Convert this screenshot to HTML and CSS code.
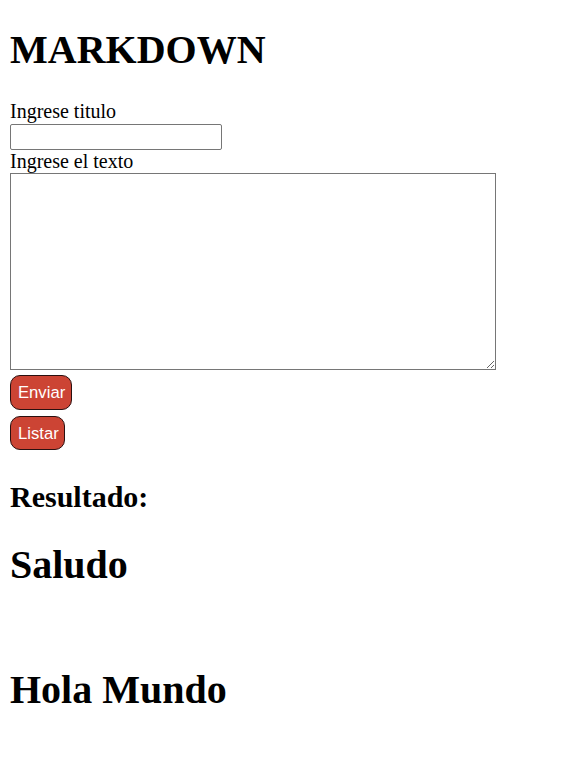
FILE: index.html
```html
<!DOCTYPE html>
<html lang="es">
<head>
<meta charset="utf-8">
<title>Markdown</title>
<link rel="stylesheet" href="styles.css">
</head>
<body>
<h1 class="title">MARKDOWN</h1>
<form class="form">
  <label class="label" for="titulo">Ingrese titulo</label>
  <input class="input" id="titulo" type="text">
  <label class="label" for="texto">Ingrese el texto</label>
  <textarea class="textarea" id="texto"></textarea>
  <div class="actions">
    <button class="btn btn-send" type="button">Enviar</button>
    <button class="btn btn-list" type="button">Listar</button>
  </div>
</form>
<h2 class="result-title">Resultado:</h2>
<div class="result">
  <h1 class="md-h1">Saludo</h1>
  <h1 class="md-h1 md-body">Hola Mundo</h1>
</div>
</body>
</html>
```
FILE: styles.css
```css
html, body {
  background: #fff;
}
body {
  margin: 0 10px 10px;
  font-family: "Liberation Serif", "Times New Roman", serif;
  font-size: 20px;
  color: #000;
}
.title {
  font-size: 40px;
  font-weight: bold;
  margin: 27px 0 27px;
  line-height: 46px;
}
.form {
  display: flex;
  flex-direction: column;
  align-items: flex-start;
}
.label {
  display: block;
  line-height: 23px;
  height: 23px;
}
.input {
  box-sizing: border-box;
  width: 212px;
  height: 26px;
  margin: 1px 0 0;
  border: 1px solid #767676;
  border-radius: 2px;
  padding: 1px 2px;
  font-family: "Liberation Sans", Arial, sans-serif;
  font-size: 16.67px;
}
.textarea {
  box-sizing: border-box;
  width: 486px;
  height: 197px;
  margin: 0;
  border: 1px solid #767676;
  padding: 2px;
  font-family: "Liberation Mono", monospace;
  font-size: 16.67px;
}
.actions {
  display: flex;
  flex-direction: column;
  align-items: flex-start;
  gap: 6px;
  margin-top: 5px;
}
.btn {
  box-sizing: border-box;
  background: #cc4434;
  color: #fff;
  border: 1px solid #2a1010;
  border-radius: 10px;
  font-family: "Liberation Sans", Arial, sans-serif;
  font-size: 16.67px;
  line-height: 19px;
  padding: 7px 7px;
  margin: 0;
}
.btn-send {
  height: 35px;
  width: 62px;
}
.btn-list {
  height: 34px;
  width: 55px;
}
.result-title {
  font-size: 30px;
  font-weight: bold;
  line-height: 34.5px;
  margin: 30px 0 0;
}
.result {
  margin-top: 27px;
}
.md-h1 {
  font-size: 40px;
  font-weight: bold;
  line-height: 46px;
  margin: 0;
}
.md-body {
  margin-top: 79px;
}
```
